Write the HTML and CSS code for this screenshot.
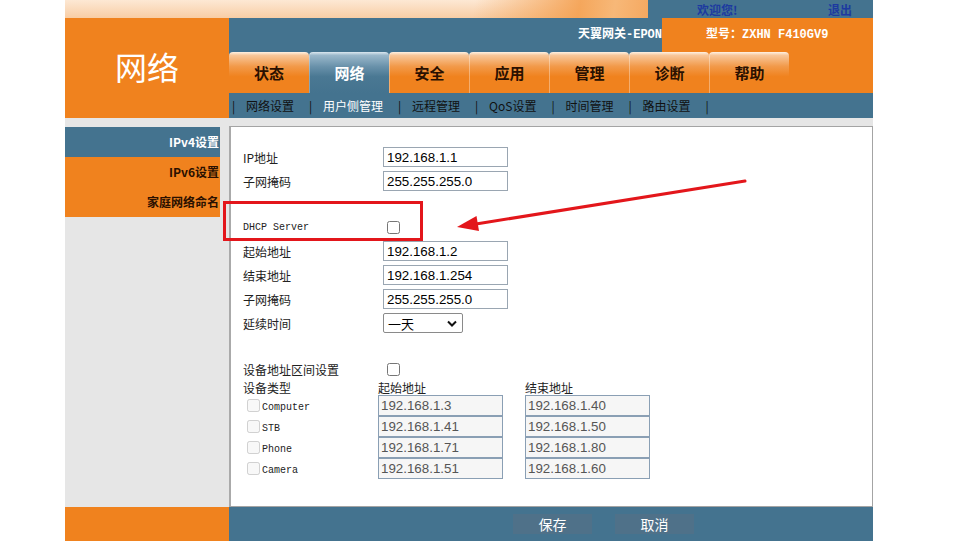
FILE: index.html
```html
<!DOCTYPE html>
<html lang="zh-CN">
<head>
<meta charset="utf-8">
<title>网络 - 用户侧管理</title>
<link rel="stylesheet" href="styles.css">
</head>
<body>
<div class="page">
  <div class="topbar">
    <div class="topbar-deco"></div>
    <div class="topbar-user"><span class="welcome">欢迎您!</span><a class="logout">退出</a></div>
  </div>

  <div class="header">
    <div class="brand">网络</div>
    <div class="head-right">
      <div class="banner">
        <div class="gw">天翼网关-EPON</div>
        <div class="model">型号：ZXHN F410GV9</div>
      </div>
      <div class="tabbar">
        <ul class="tabs">
          <li class="tab">状态</li>
          <li class="tab active">网络</li>
          <li class="tab">安全</li>
          <li class="tab">应用</li>
          <li class="tab">管理</li>
          <li class="tab">诊断</li>
          <li class="tab">帮助</li>
        </ul>
      </div>
      <div class="subnav">
        <span class="sep">|</span><a class="sub">网络设置</a>
        <span class="sep">|</span><a class="sub current">用户侧管理</a>
        <span class="sep">|</span><a class="sub">远程管理</a>
        <span class="sep">|</span><a class="sub">QoS设置</a>
        <span class="sep">|</span><a class="sub">时间管理</a>
        <span class="sep">|</span><a class="sub">路由设置</a>
        <span class="sep">|</span>
      </div>
    </div>
  </div>

  <div class="main">
    <aside class="sidebar">
      <div class="side-item active">IPv4设置</div>
      <div class="side-item">IPv6设置</div>
      <div class="side-item">家庭网络命名</div>
    </aside>
    <section class="panel">
      <div class="row"><label class="lbl">IP地址</label><input class="txt" value="192.168.1.1"></div>
      <div class="row"><label class="lbl">子网掩码</label><input class="txt" value="255.255.255.0"></div>
      <div class="row gap"><label class="lbl mono">DHCP Server</label><input type="checkbox" class="chk"></div>
      <div class="row"><label class="lbl">起始地址</label><input class="txt" value="192.168.1.2"></div>
      <div class="row"><label class="lbl">结束地址</label><input class="txt" value="192.168.1.254"></div>
      <div class="row"><label class="lbl">子网掩码</label><input class="txt" value="255.255.255.0"></div>
      <div class="row"><label class="lbl">延续时间</label>
        <div class="select"><span>一天</span><svg width="10" height="7" viewBox="0 0 10 7"><path d="M1 1.5 L5 5.5 L9 1.5" fill="none" stroke="#111" stroke-width="2"/></svg></div>
      </div>
      <div class="row gap"><label class="lbl">设备地址区间设置</label><input type="checkbox" class="chk"></div>
      <div class="dev-grid">
        <div class="dev-head">设备类型</div><div class="dev-head">起始地址</div><div class="dev-head">结束地址</div>
        <div class="dev-type"><input type="checkbox" class="chk-dis" disabled><span class="mono">Computer</span></div>
        <div><input class="dev-txt" value="192.168.1.3" disabled></div>
        <div><input class="dev-txt" value="192.168.1.40" disabled></div>
        <div class="dev-type"><input type="checkbox" class="chk-dis" disabled><span class="mono">STB</span></div>
        <div><input class="dev-txt" value="192.168.1.41" disabled></div>
        <div><input class="dev-txt" value="192.168.1.50" disabled></div>
        <div class="dev-type"><input type="checkbox" class="chk-dis" disabled><span class="mono">Phone</span></div>
        <div><input class="dev-txt" value="192.168.1.71" disabled></div>
        <div><input class="dev-txt" value="192.168.1.80" disabled></div>
        <div class="dev-type"><input type="checkbox" class="chk-dis" disabled><span class="mono">Camera</span></div>
        <div><input class="dev-txt" value="192.168.1.51" disabled></div>
        <div><input class="dev-txt" value="192.168.1.60" disabled></div>
      </div>
    </section>
  </div>

  <div class="footer">
    <div class="foot-left"></div>
    <div class="foot-right">
      <button class="btn">保存</button>
      <button class="btn">取消</button>
    </div>
  </div>

  <div class="annot-box"></div>
  <svg class="annot-arrow" width="808" height="548" viewBox="0 0 808 548">
    <line x1="680" y1="181" x2="411" y2="224" stroke="#e3161b" stroke-width="3" stroke-linecap="round"/>
    <polygon points="392,227 414,231 411.5,216" fill="#e3161b"/>
  </svg>
</div>
</body>
</html>
```

FILE: styles.css
```css
body {
  margin: 0;
  background: #fff;
  font-family: "Noto Sans CJK SC", sans-serif;
  font-size: 12px;
  color: #222;
}

.page {
  position: relative;
  width: 808px;
  margin-left: 65px;
}

/* top strip */
.topbar {
  display: flex;
  height: 18px;
}
.topbar-deco {
  flex: 1;
  background:
    linear-gradient(100deg, rgba(255,255,255,0) 70%, rgba(244,160,80,0.9) 88%, #f7b878 94%, #f5a860 100%),
    linear-gradient(180deg, #fde8d4 0%, #f8cda5 100%);
}
.topbar-user {
  width: 225px;
  box-sizing: border-box;
  background: #44738f;
  display: flex;
  align-items: center;
  padding-left: 49px;
  font-size: 12px;
  font-weight: bold;
  color: #1d3aa0;
}
.welcome { width: 131px; }
.logout { cursor: pointer; }

/* header */
.header {
  display: grid;
  grid-template-columns: 164px 644px;
}
.brand {
  height: 100px;
  box-sizing: border-box;
  background: #f0821e;
  color: #fff;
  font-size: 32px;
  line-height: 1;
  text-align: center;
  padding-top: 32px;
}
.banner {
  display: flex;
  height: 34px;
  font-weight: bold;
  color: #fff;
  font-size: 12px;
  line-height: 34px;
}
.gw {
  flex: 1;
  background: #44738f;
  text-align: right;
  overflow: hidden;
  white-space: nowrap;
  font-family: "Liberation Mono", "Noto Sans CJK SC", monospace;
}
.model {
  width: 211px;
  box-sizing: border-box;
  background: #f0821e;
  padding-left: 44px;
  font-family: "Liberation Mono", "Noto Sans CJK SC", monospace;
}
.tabbar {
  height: 41px;
  display: flex;
  background: linear-gradient(to right, #44738f 433px, #f0821e 433px);
}
.tabs {
  display: flex;
  list-style: none;
  margin: 0;
  padding: 0;
}
.tab {
  width: 80px;
  height: 41px;
  box-sizing: border-box;
  border-left: 1px solid rgba(255,255,255,0.35);
  border-radius: 4px 4px 0 0;
  background: linear-gradient(180deg, #fff2e4 0%, #f8c79a 8%, #f29a4a 35%, #f0821e 60%, #f0821e 100%);
  text-align: center;
  line-height: 41px;
  font-size: 15px;
  font-weight: bold;
  color: #2a1000;
}
.tab:first-child { border-left: none; }
.tab.active {
  background: linear-gradient(180deg, #dce8f0 0%, #9bb8cb 8%, #6a92ab 35%, #4a7893 60%, #44738f 100%);
  color: #fff;
}
.subnav {
  height: 25px;
  background: #44738f;
  display: flex;
  align-items: center;
  padding-left: 3px;
  font-size: 12px;
  color: #111;
  white-space: nowrap;
}
.sep {
  display: inline-block;
  width: 3px;
  text-align: center;
}
.sub {
  margin: 0 15px 0 11px;
}
.sub.current { color: #fff; }

/* main */
.main {
  display: grid;
  grid-template-columns: 164px 644px;
  background: #e6e6e6;
  padding-top: 8px;
}
.sidebar {
  padding-top: 1px;
}
.side-item {
  width: 155px;
  height: 30px;
  box-sizing: border-box;
  line-height: 30px;
  text-align: right;
  padding-right: 1px;
  background: #f0821e;
  font-weight: bold;
  font-size: 12px;
  color: #2a1000;
}
.side-item.active {
  background: #44738f;
  color: #fff;
}
.panel {
  height: 381px;
  box-sizing: border-box;
  background: #fff;
  border: 1px solid #a4a4a4;
  border-left: 2px solid #aaaaaa;
  padding: 18px 0 0 12px;
}
.row {
  display: flex;
  align-items: center;
  height: 24px;
}
.row.gap { margin-top: 22px; }
.lbl {
  width: 140px;
  flex: none;
  font-size: 12px;
  color: #222;
}
.mono {
  font-family: "Liberation Mono", "DejaVu Sans Mono", monospace;
  font-size: 10px;
  color: #222;
}
.txt {
  width: 125px;
  height: 20px;
  box-sizing: border-box;
  margin: 0;
  border: 1px solid #9aa6b2;
  padding: 0 3px;
  font-family: "Liberation Sans", sans-serif;
  font-size: 13.33px;
  color: #000;
  background: #fff;
}
.chk {
  margin: 0 0 0 4px;
  width: 13px;
  height: 13px;
}
.select {
  width: 80px;
  height: 20px;
  box-sizing: border-box;
  border: 1px solid #8a8a8a;
  border-radius: 2px;
  display: flex;
  align-items: center;
  justify-content: space-between;
  padding: 0 5px 0 4px;
  font-family: "Liberation Sans", "Noto Sans CJK SC", sans-serif;
  font-size: 13px;
  color: #000;
}

.dev-grid {
  display: grid;
  grid-template-columns: 135px 147px 125px;
  grid-auto-rows: 21px;
  grid-template-rows: 14px;
}
.dev-head {
  font-size: 12px;
  line-height: 14px;
  color: #222;
}
.dev-type {
  display: flex;
  align-items: center;
}
.chk-dis {
  margin: 0 2px 0 4px;
  width: 13px;
  height: 13px;
}
.dev-type .mono { padding-top: 4px; }
.dev-txt {
  width: 125px;
  height: 21px;
  box-sizing: border-box;
  margin: 0;
  border: 1px solid #8a9fb4;
  padding: 0 2px;
  font-family: "Liberation Sans", sans-serif;
  font-size: 13.33px;
  color: #555;
  background: #f6f6f6;
}

/* footer */
.footer {
  display: grid;
  grid-template-columns: 164px 644px;
  height: 34px;
}
.foot-left { background: #f0821e; }
.foot-right {
  background: #44738f;
  display: flex;
  align-items: center;
  gap: 23px;
  padding-left: 284px;
}
.btn {
  width: 79px;
  height: 20px;
  border: none;
  background: #4f7189;
  color: #fff;
  font-family: "Noto Sans CJK SC", sans-serif;
  font-size: 14px;
  line-height: 20px;
  padding: 0;
}

/* annotations */
.annot-box {
  position: absolute;
  left: 158px;
  top: 201px;
  width: 200px;
  height: 40px;
  box-sizing: border-box;
  border: 3px solid #e3161b;
}
.annot-arrow {
  position: absolute;
  left: 0;
  top: 0;
  pointer-events: none;
}
```
